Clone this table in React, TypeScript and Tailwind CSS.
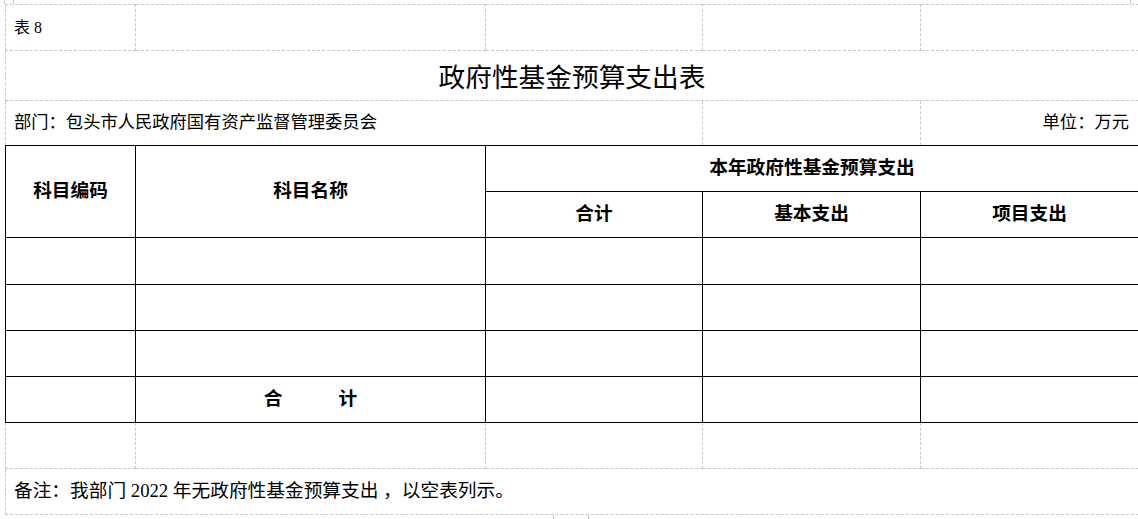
const dashed = 'border-dashed border-[#c8c8c8]';
const solid = 'border-solid border-black';
const serif = "font-['Liberation_Serif','Noto_Sans_CJK_SC',serif] text-black";

function Cell({ className = '', children }: { className?: string; children?: React.ReactNode }) {
  return <div className={`flex items-center ${className}`}>{children}</div>;
}

const dataRows = [0, 1, 2];

export default function App() {
  return (
    <div className="w-[1138px] h-[519px] overflow-hidden bg-white">
      {/* sheet corner marks */}
      <div className="flex h-[4px]">
        <div className="ml-[4px] w-[10px] border-x border-[#c8c8c8]" />
        <div className="ml-auto mr-[7px] w-px bg-[#c8c8c8]" />
      </div>

      <div
        className={`ml-[5px] w-[1134px] grid grid-cols-[131px_350px_217px_218px_218px] grid-rows-[47px_50px_44px_47px_46px_47px_46px_46px_46px_46px_46px] ${serif}`}
      >
        {/* 表 8 */}
        <Cell className={`border-t border-l border-r border-b ${dashed} pl-[8px] text-[16px]`}>表 8</Cell>
        <Cell className={`border-t border-r border-b ${dashed}`} />
        <Cell className={`border-t border-r border-b ${dashed}`} />
        <Cell className={`border-t border-r border-b ${dashed}`} />
        <Cell className={`border-t border-r border-b ${dashed}`} />

        {/* title */}
        <Cell
          className={`col-span-5 justify-center border-l border-r border-b ${dashed} font-['Noto_Sans_CJK_SC',sans-serif] text-[26.7px] pt-[1px]`}
        >
          政府性基金预算支出表
        </Cell>

        {/* 部门 / 单位 */}
        <Cell className={`col-span-3 border-l border-r ${dashed} pl-[8px] text-[17.3px]`}>
          部门：包头市人民政府国有资产监督管理委员会
        </Cell>
        <Cell className={`border-r ${dashed}`} />
        <Cell className={`justify-end border-r ${dashed} pr-[9px] text-[17.3px]`}>单位：万元</Cell>

        {/* header */}
        <Cell className={`row-span-2 justify-center border-t border-l border-r border-b ${solid} font-bold text-[18.7px]`}>
          科目编码
        </Cell>
        <Cell className={`row-span-2 justify-center border-t border-r border-b ${solid} font-bold text-[18.7px]`}>
          科目名称
        </Cell>
        <Cell className={`col-span-3 justify-center border-t border-r border-b ${solid} font-bold text-[18.7px]`}>
          本年政府性基金预算支出
        </Cell>
        <Cell className={`justify-center border-r border-b ${solid} font-bold text-[18.7px]`}>合计</Cell>
        <Cell className={`justify-center border-r border-b ${solid} font-bold text-[18.7px]`}>基本支出</Cell>
        <Cell className={`justify-center border-r border-b ${solid} font-bold text-[18.7px]`}>项目支出</Cell>

        {/* empty rows */}
        {dataRows.map((r) => (
          <div key={r} className="contents">
            <Cell className={`border-l border-r border-b ${solid}`} />
            <Cell className={`border-r border-b ${solid}`} />
            <Cell className={`border-r border-b ${solid}`} />
            <Cell className={`border-r border-b ${solid}`} />
            <Cell className={`border-r border-b ${solid}`} />
          </div>
        ))}

        {/* total */}
        <Cell className={`border-l border-r border-b ${solid}`} />
        <Cell className={`justify-center border-r border-b ${solid} font-bold text-[18.7px]`}>合　　　计</Cell>
        <Cell className={`border-r border-b ${solid}`} />
        <Cell className={`border-r border-b ${solid}`} />
        <Cell className={`border-r border-b ${solid}`} />

        {/* blank row under table */}
        <Cell className={`border-l border-r border-b ${dashed}`} />
        <Cell className={`border-r border-b ${dashed}`} />
        <Cell className={`border-r border-b ${dashed}`} />
        <Cell className={`border-r border-b ${dashed}`} />
        <Cell className={`border-r border-b ${dashed}`} />

        {/* note */}
        <Cell className={`col-span-5 border-l border-r border-b ${dashed} pl-[8px] text-[18.7px]`}>
          备注：我部门 2022 年无政府性基金预算支出 ，以空表列示。
        </Cell>
      </div>

      {/* sheet tab edge */}
      <div className="flex h-[4px]">
        <div className="ml-[553px] w-[36px] border-x border-[#c0c0c0]" />
      </div>
    </div>
  );
}
